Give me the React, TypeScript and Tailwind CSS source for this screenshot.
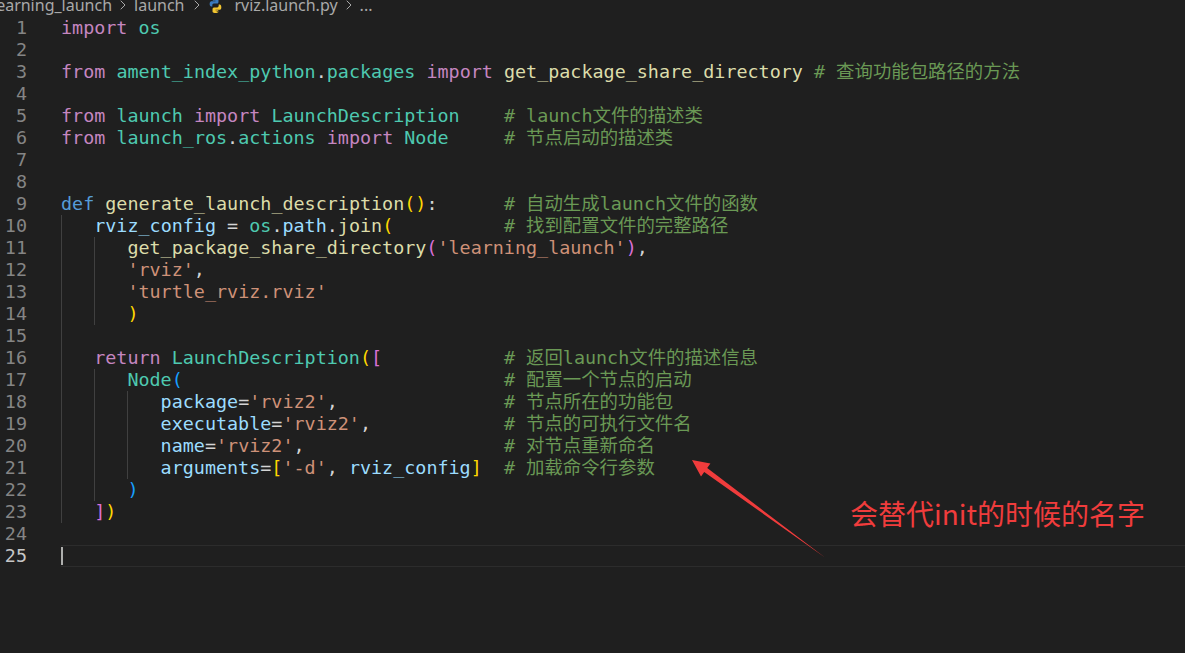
import { ChevronRight } from "lucide-react";

type Tok = [string, string];
type Line = { indent: number; toks: Tok[] };

const kw = "text-[#c586c0]";
const df = "text-[#569cd6]";
const mod = "text-[#4ec9b0]";
const fn = "text-[#dcdcaa]";
const vr = "text-[#9cdcfe]";
const st = "text-[#ce9178]";
const cm = "text-[#6a9955]";
const tx = "text-[#d4d4d4]";
const b1 = "text-[#ffd700]";
const b2 = "text-[#da70d6]";
const b3 = "text-[#179fff]";

const pad = (n: number) => " ".repeat(n);

const lines: Line[] = [
  { indent: 0, toks: [[kw, "import"], [tx, " "], [mod, "os"]] },
  { indent: 0, toks: [] },
  {
    indent: 0,
    toks: [
      [kw, "from"], [tx, " "], [mod, "ament_index_python"], [tx, "."], [mod, "packages"], [tx, " "],
      [kw, "import"], [tx, " "], [fn, "get_package_share_directory"], [tx, " "], [cm, "# 查询功能包路径的方法"],
    ],
  },
  { indent: 0, toks: [] },
  {
    indent: 0,
    toks: [[kw, "from"], [tx, " "], [mod, "launch"], [tx, " "], [kw, "import"], [tx, " "], [mod, "LaunchDescription"], [tx, pad(4)], [cm, "# launch文件的描述类"]],
  },
  {
    indent: 0,
    toks: [[kw, "from"], [tx, " "], [mod, "launch_ros"], [tx, "."], [mod, "actions"], [tx, " "], [kw, "import"], [tx, " "], [mod, "Node"], [tx, pad(5)], [cm, "# 节点启动的描述类"]],
  },
  { indent: 0, toks: [] },
  { indent: 0, toks: [] },
  {
    indent: 0,
    toks: [[df, "def"], [tx, " "], [fn, "generate_launch_description"], [b1, "()"], [tx, ":"], [tx, pad(6)], [cm, "# 自动生成launch文件的函数"]],
  },
  {
    indent: 1,
    toks: [[vr, "rviz_config"], [tx, " = "], [mod, "os"], [tx, "."], [vr, "path"], [tx, "."], [fn, "join"], [b1, "("], [tx, pad(10)], [cm, "# 找到配置文件的完整路径"]],
  },
  { indent: 2, toks: [[fn, "get_package_share_directory"], [b2, "("], [st, "'learning_launch'"], [b2, ")"], [tx, ","]] },
  { indent: 2, toks: [[st, "'rviz'"], [tx, ","]] },
  { indent: 2, toks: [[st, "'turtle_rviz.rviz'"]] },
  { indent: 2, toks: [[b1, ")"]] },
  { indent: 1, toks: [] },
  {
    indent: 1,
    toks: [[kw, "return"], [tx, " "], [mod, "LaunchDescription"], [b1, "("], [b2, "["], [tx, pad(11)], [cm, "# 返回launch文件的描述信息"]],
  },
  { indent: 2, toks: [[mod, "Node"], [b3, "("], [tx, pad(29)], [cm, "# 配置一个节点的启动"]] },
  { indent: 3, toks: [[vr, "package"], [tx, "="], [st, "'rviz2'"], [tx, ","], [tx, pad(15)], [cm, "# 节点所在的功能包"]] },
  { indent: 3, toks: [[vr, "executable"], [tx, "="], [st, "'rviz2'"], [tx, ","], [tx, pad(12)], [cm, "# 节点的可执行文件名"]] },
  { indent: 3, toks: [[vr, "name"], [tx, "="], [st, "'rviz2'"], [tx, ","], [tx, pad(18)], [cm, "# 对节点重新命名"]] },
  {
    indent: 3,
    toks: [[vr, "arguments"], [tx, "="], [b1, "["], [st, "'-d'"], [tx, ", "], [vr, "rviz_config"], [b1, "]"], [tx, pad(2)], [cm, "# 加载命令行参数"]],
  },
  { indent: 2, toks: [[b3, ")"]] },
  { indent: 1, toks: [[b2, "]"], [b1, ")"]] },
  { indent: 0, toks: [] },
  { indent: 0, toks: [] },
];

function PythonIcon() {
  return (
    <svg width="17" height="17" viewBox="0 0 16 16">
      <path d="M7.9 1C5.2 1 5.4 2.2 5.4 2.2v1.3h2.6v.4H4.3S2.5 3.7 2.5 6.4s1.6 2.6 1.6 2.6h.9V7.7s0-1.6 1.6-1.6h2.7s1.5 0 1.5-1.5V2.6S11 1 7.9 1zm-1.5.9a.5.5 0 1 1 0 1 .5.5 0 0 1 0-1z" fill="#3b7bbf" />
      <path d="M8.1 15c2.7 0 2.5-1.2 2.5-1.2v-1.3H8v-.4h3.7s1.8.2 1.8-2.5-1.6-2.6-1.6-2.6H11v1.3s0 1.6-1.6 1.6H6.7s-1.5 0-1.5 1.5v2.2S5 15 8.1 15zm1.5-.9a.5.5 0 1 1 0-1 .5.5 0 0 1 0 1z" fill="#f2c530" />
    </svg>
  );
}

function Breadcrumb() {
  return (
    <div className="h-[17px] overflow-hidden">
      <div className="mt-[-6px] flex h-[22px] items-center text-[16px] leading-[22px] text-[#a9a9a9] whitespace-nowrap" style={{ fontFamily: '"Noto Sans", sans-serif' }}>
        <span className="ml-[-8px]">learning_launch</span>
        <ChevronRight size={16} strokeWidth={1.5} className="mx-[3px]" />
        <span>launch</span>
        <ChevronRight size={16} strokeWidth={1.5} className="ml-[4px] mr-[2px]" />
        <PythonIcon />
        <span className="ml-[11px]">rviz.launch.py</span>
        <ChevronRight size={16} strokeWidth={1.5} className="mx-[3px]" />
        <span>...</span>
      </div>
    </div>
  );
}

function CodeLine({ line, n, current }: { line: Line; n: number; current: boolean }) {
  return (
    <div className="flex h-[22px]">
      <div className="w-[61px] shrink-0">
        <div className={`w-[27px] text-right ${current ? "text-[#c6c6c6]" : "text-[#858585]"}`}>{n}</div>
      </div>
      <div className={`flex flex-1 ${current ? "border-y border-[#2c2c2c]" : ""}`}>
        {Array.from({ length: line.indent }).map((_, i) => (
          <div key={i} className="w-[3ch] shrink-0 border-l border-[#404040]" />
        ))}
        {current && <div className="my-[1px] w-[2px] bg-[#aeafad]" />}
        <span className="whitespace-pre">
          {line.toks.map(([c, t], i) => (
            <span key={i} className={c}>{t}</span>
          ))}
        </span>
      </div>
    </div>
  );
}

export default function App() {
  return (
    <div className="relative h-[653px] w-[1185px] overflow-hidden bg-[#1f1f1f]">
      <Breadcrumb />
      <div
        className="text-[18.4px] leading-[22px]"
        style={{ fontFamily: '"DejaVu Sans Mono", "Noto Sans CJK SC", monospace' }}
      >
        {lines.map((l, i) => (
          <CodeLine key={i} line={l} n={i + 1} current={i === 24} />
        ))}
      </div>

      <svg className="absolute left-0 top-0" width="1185" height="653">
        <polygon
          points="692,460 710.4,463.6 707.2,468 825,557.5 704.2,472 701,476.4"
          fill="#f03c3c"
        />
      </svg>
      <div
        className="absolute left-[850px] top-[497px] text-[28px] leading-[32px] text-[#f03c3c] whitespace-nowrap"
        style={{ fontFamily: '"Noto Sans CJK SC", sans-serif' }}
      >
        会替代init的时候的名字
      </div>
    </div>
  );
}
